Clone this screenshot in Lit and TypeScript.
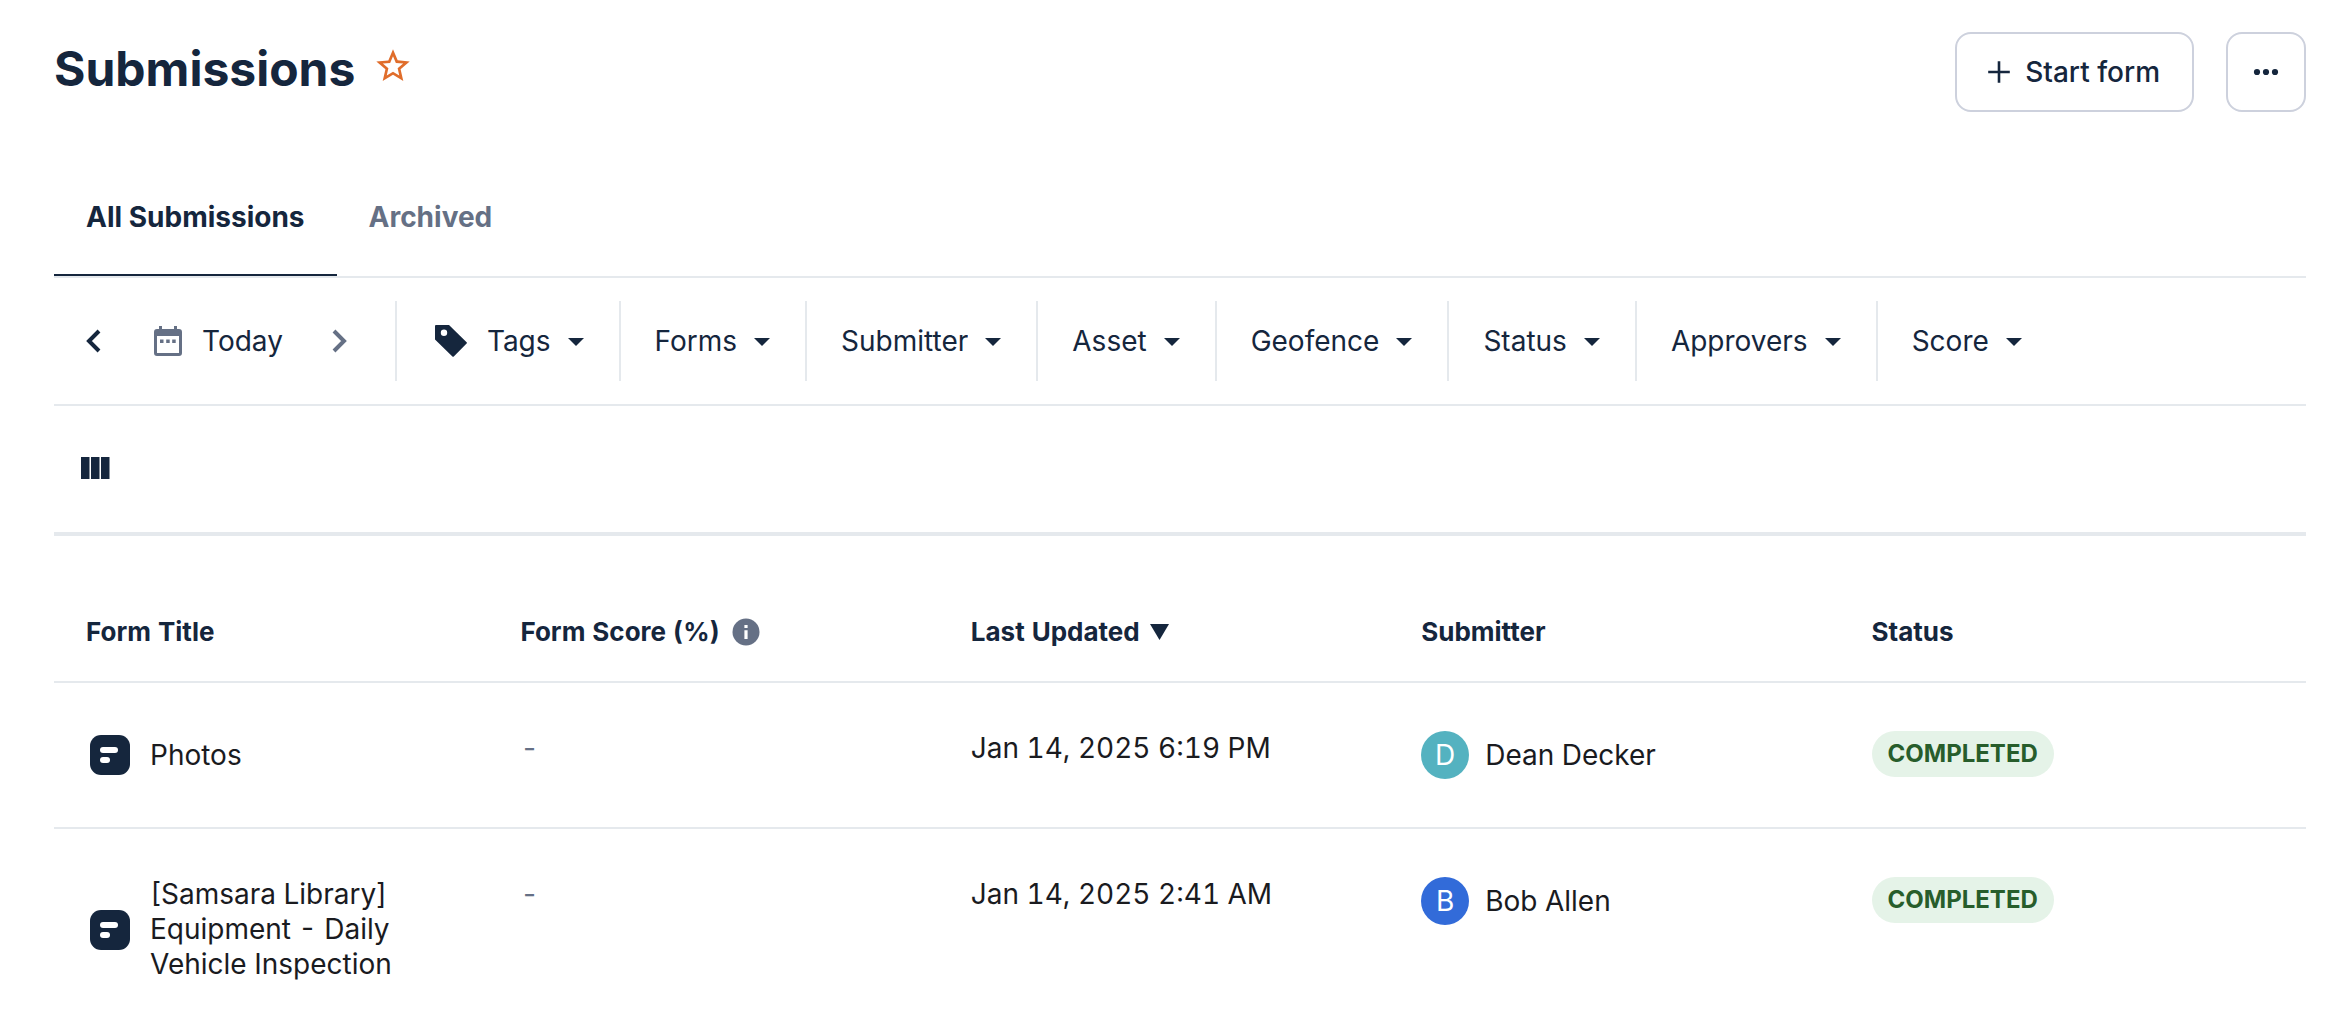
import { LitElement, html, css, svg, nothing } from "lit";
import { customElement, state } from "lit/decorators.js";
import { classMap } from "lit/directives/class-map.js";

interface Submission {
  title: string;
  score: string;
  updated: string;
  submitter: string;
  tone: "teal" | "blue";
  status: string;
}

const TABS = ["All Submissions", "Archived"];

const FILTERS = ["Tags", "Forms", "Submitter", "Asset", "Geofence", "Status", "Approvers", "Score"];

const SUBMISSIONS: Submission[] = [
  {
    title: "Photos",
    score: "-",
    updated: "Jan 14, 2025 6:19 PM",
    submitter: "Dean Decker",
    tone: "teal",
    status: "COMPLETED",
  },
  {
    title: "[Samsara Library] Equipment - Daily Vehicle Inspection",
    score: "-",
    updated: "Jan 14, 2025 2:41 AM",
    submitter: "Bob Allen",
    tone: "blue",
    status: "COMPLETED",
  },
];

const icon = (name: string, width: number, height: number, body: unknown) => html`
  <svg class="icon ${name}" width=${width} height=${height} viewBox="0 0 ${width} ${height}" aria-hidden="true">
    ${body}
  </svg>
`;

const starIcon = html`
  <svg class="icon" width="40" height="40" viewBox="0 0 24 24" aria-hidden="true">
    <path
      fill="currentColor"
      d="M22 9.24l-7.19-.62L12 2 9.19 8.63 2 9.24l5.46 4.73L5.82 21 12 17.27 18.18 21l-1.63-7.03L22 9.24zM12 15.4l-3.76 2.27 1-4.28-3.32-2.88 4.38-.38L12 6.1l1.71 4.04 4.38.38-3.32 2.88 1 4.28L12 15.4z"
    />
  </svg>
`;

const plusIcon = icon("plus", 24, 24, svg`<path d="M12 1.2V22.8M1.2 12H22.8" fill="none" stroke="currentColor" stroke-width="2.6"/>`);

const moreIcon = icon(
  "more",
  26,
  8,
  svg`<g fill="currentColor"><circle cx="4" cy="4" r="3.1"/><circle cx="13" cy="4" r="3.1"/><circle cx="22" cy="4" r="3.1"/></g>`,
);

const previousIcon = icon("previous", 16, 24, svg`<path d="M13 2L3 12L13 22" fill="none" stroke="currentColor" stroke-width="4"/>`);

const nextIcon = icon("next", 16, 24, svg`<path d="M3 2L13 12L3 22" fill="none" stroke="currentColor" stroke-width="4"/>`);

const calendarIcon = icon(
  "calendar",
  28,
  30,
  svg`
    <path fill="currentColor" fill-rule="evenodd" d="M5 0h3v3h12V0h3v3h2a3 3 0 0 1 3 3v21a3 3 0 0 1-3 3H3a3 3 0 0 1-3-3V6a3 3 0 0 1 3-3h2zM3 10v17h22V10z"/>
    <path fill="currentColor" d="M6 13.500h3.500v3.500H6zM12.200 13.500h3.500v3.500h-3.500zM18.200 13.500h3.500v3.500h-3.500z"/>
  `,
);

const tagIcon = icon(
  "tag",
  32,
  32,
  svg`<path fill="currentColor" fill-rule="evenodd" d="M0 1a1 1 0 0 1 1-1h13L31.600 17.200a1 1 0 0 1 0 1.400L18.800 31.500a1 1 0 0 1-1.400 0L0 14.500zM9 4.600a3.200 3.200 0 1 0 0 6.400a3.200 3.200 0 1 0 0-6.400z"/>`,
);

const caretIcon = icon("caret", 16, 8, svg`<path fill="currentColor" d="M0 0H16L8 8z"/>`);

const columnsIcon = icon("columns", 29, 22, svg`<path fill="currentColor" d="M0 0h8.500v22H0zM10 0h8.500v22H10zM20 0h8.500v22H20z"/>`);

const infoIcon = icon(
  "info",
  28,
  28,
  svg`<circle cx="14" cy="14" r="13.500" fill="currentColor"/><path fill="#fff" d="M12.400 7h3.200v3h-3.200zM12.400 12.200h3.200V21h-3.200z"/>`,
);

const sortIcon = icon("sort", 19, 16, svg`<path fill="currentColor" d="M0 0H19L9.500 16z"/>`);

const formIcon = icon(
  "form",
  40,
  40,
  svg`
    <rect width="40" height="40" rx="11" fill="currentColor"/>
    <rect x="10" y="12" width="18" height="6" rx="3" fill="#fff"/>
    <rect x="10" y="22" width="10" height="6" rx="3" fill="#fff"/>
  `,
);

@customElement("app-root")
export class AppRoot extends LitElement {
  static styles = css`
    :host {
      --ink: #15263d;
      --muted: #657085;
      --text: #1a1b1f;
      --line: #e5e9ed;
      display: block;
      box-sizing: border-box;
      min-height: 100vh;
      padding: 32px 40px 32px 54px;
      background: #fff;
      color: var(--ink);
      font: 400 28px/35px Inter, "Liberation Sans", sans-serif;
    }

    button,
    select {
      margin: 0;
      padding: 0;
      border: 0;
      background: none;
      color: inherit;
      font: inherit;
      cursor: pointer;
    }

    .icon {
      display: block;
      flex: none;
    }

    .header {
      display: flex;
      justify-content: space-between;
      align-items: flex-start;
      margin-bottom: 58px;
    }

    .heading {
      display: flex;
      align-items: flex-start;
      gap: 18px;
      height: 72px;
    }

    .title {
      margin: 0;
      padding-top: 9px;
      font-size: 48px;
      line-height: 56px;
      font-weight: 700;
    }

    .favorite {
      padding-top: 14px;
      color: #e06d2b;
    }

    .actions {
      display: flex;
      gap: 32px;
    }

    .action {
      display: flex;
      align-items: center;
      justify-content: center;
      gap: 14px;
      box-sizing: border-box;
      height: 80px;
      min-width: 80px;
      border: 2px solid #cdd1dd;
      border-radius: 16px;
      font-weight: 500;
    }

    .action-wide {
      padding: 0 32px 0 30px;
    }

    .tabs {
      display: flex;
      border-bottom: 2px solid var(--line);
    }

    .tab {
      height: 106px;
      padding: 0 32px 10px;
      border-bottom: 2px solid transparent;
      color: var(--muted);
      font-weight: 700;
    }

    .tab-active {
      border-color: var(--ink);
      color: var(--ink);
    }

    .filters {
      display: flex;
      flex-wrap: wrap;
      padding: 23px 0;
      border-bottom: 2px solid var(--line);
    }

    .period {
      display: flex;
      align-items: center;
      padding: 0 48px 0 32px;
    }

    .date {
      display: flex;
      align-items: center;
      gap: 20px;
      padding: 0 48px 0 52px;
    }

    .calendar,
    .next {
      color: var(--muted);
    }

    .filter {
      display: flex;
      align-items: center;
      gap: 20px;
      height: 80px;
      padding: 0 35px 0 34px;
      border-left: 2px solid var(--line);
    }

    .filter-icon {
      padding-left: 4px;
    }

    .picker {
      display: grid;
      align-items: center;
    }

    .picker > * {
      grid-area: 1 / 1;
    }

    .picker .caret {
      justify-self: end;
      margin-top: 2px;
      pointer-events: none;
    }

    .select {
      appearance: none;
      field-sizing: content;
      padding-right: 33px;
    }

    .toolbar {
      display: flex;
      align-items: center;
      height: 124px;
      padding: 0 27px 2px;
      border-bottom: 4px solid var(--line);
    }

    .table {
      width: 100%;
      margin-top: 48px;
      border-spacing: 0;
      table-layout: fixed;
      text-align: left;
      font-variant-numeric: tabular-nums;
    }

    .head,
    .cell {
      border-bottom: 2px solid var(--line);
      vertical-align: top;
    }

    .head {
      padding: 32px 16px 33px;
      font-size: 26px;
      line-height: 32px;
      font-weight: 700;
    }

    .cell {
      padding: 48px 16px;
      color: var(--text);
    }

    .head:first-child,
    .cell:first-child {
      padding-left: 32px;
    }

    .row:last-child .cell {
      border-bottom: 0;
    }

    .label,
    .sort-button {
      display: flex;
      align-items: center;
      gap: 12px;
    }

    .sort-button {
      gap: 10px;
    }

    .info {
      color: var(--muted);
      margin: -2px 0;
    }

    .form {
      color: var(--ink);
    }

    .entry,
    .person {
      display: flex;
      align-items: center;
      min-height: 48px;
    }

    .entry {
      gap: 20px;
      padding-left: 4px;
    }

    .entry-name {
      max-width: 300px;
    }

    .person {
      gap: 16px;
    }

    .score {
      color: var(--muted);
    }

    .avatar {
      display: grid;
      place-items: center;
      width: 48px;
      height: 48px;
      border-radius: 50%;
      color: #fff;
    }

    .teal {
      background: #54b2c0;
    }

    .blue {
      background: #326bd9;
    }

    .status {
      display: block;
      width: fit-content;
      padding: 7px 16px;
      border-radius: 23px;
      background: #e5f3e8;
      color: #275d2b;
      font-size: 24px;
      line-height: 32px;
      font-weight: 700;
    }
  `;

  @state() private activeTab = TABS[0];

  private renderFilter(name: string) {
    return html`
      <div class="filter">
        ${name === "Tags" ? html`<span class="filter-icon">${tagIcon}</span>` : nothing}
        <div class="picker">
          <select class="select" aria-label=${name}>
            <option>${name}</option>
          </select>
          ${caretIcon}
        </div>
      </div>
    `;
  }

  private renderRow(item: Submission) {
    return html`
      <tr class="row">
        <td class="cell"><div class="entry">${formIcon}<span class="entry-name">${item.title}</span></div></td>
        <td class="cell"><div class="score">${item.score}</div></td>
        <td class="cell">${item.updated}</td>
        <td class="cell">
          <div class="person"><span class="avatar ${item.tone}">${item.submitter[0]}</span>${item.submitter}</div>
        </td>
        <td class="cell"><span class="status">${item.status}</span></td>
      </tr>
    `;
  }

  render() {
    return html`
      <header class="header">
        <div class="heading">
          <h1 class="title">Submissions</h1>
          <button class="favorite" aria-label="Add to favorites">${starIcon}</button>
        </div>
        <div class="actions">
          <button class="action action-wide">${plusIcon}Start form</button>
          <button class="action" aria-label="More actions">${moreIcon}</button>
        </div>
      </header>

      <div class="tabs" role="tablist">
        ${TABS.map(
          (tab) => html`
            <button
              class=${classMap({ tab: true, "tab-active": tab === this.activeTab })}
              role="tab"
              aria-selected=${tab === this.activeTab ? "true" : "false"}
              @click=${() => (this.activeTab = tab)}
            >
              ${tab}
            </button>
          `,
        )}
      </div>

      <div class="filters">
        <div class="period">
          <button aria-label="Previous day">${previousIcon}</button>
          <button class="date">${calendarIcon}Today</button>
          <button aria-label="Next day">${nextIcon}</button>
        </div>
        ${FILTERS.map((name) => this.renderFilter(name))}
      </div>

      <div class="toolbar">
        <button aria-label="Edit columns">${columnsIcon}</button>
      </div>

      <table class="table">
        <thead>
          <tr>
            <th class="head" scope="col">Form Title</th>
            <th class="head" scope="col"><span class="label">Form Score (%)${infoIcon}</span></th>
            <th class="head" scope="col" aria-sort="descending">
              <button class="sort-button">Last Updated${sortIcon}</button>
            </th>
            <th class="head" scope="col">Submitter</th>
            <th class="head" scope="col">Status</th>
          </tr>
        </thead>
        <tbody>
          ${SUBMISSIONS.map((item) => this.renderRow(item))}
        </tbody>
      </table>
    `;
  }
}
